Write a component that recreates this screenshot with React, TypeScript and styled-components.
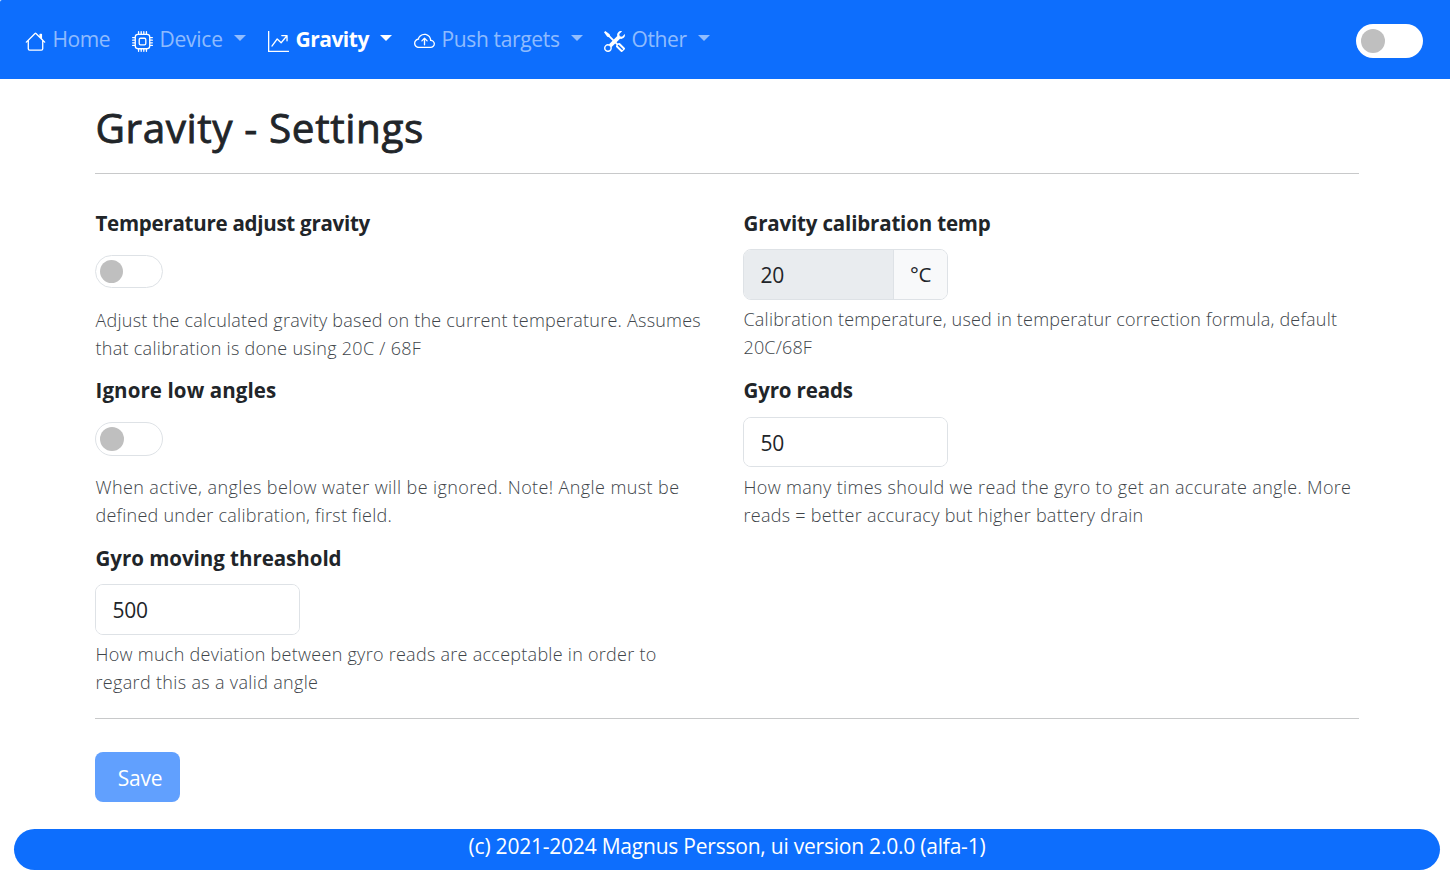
import React from "react";
import styled, { createGlobalStyle } from "styled-components";
import { BsHouse, BsCpu, BsGraphUpArrow, BsCloudArrowUp, BsTools } from "react-icons/bs";

const GlobalStyle = createGlobalStyle`
  *, *::before, *::after { box-sizing: border-box; }
  html { background: #fff; }
  body {
    margin: 0;
    color: #212529;
    background: #fff;
    font-family: "Segoe UI", "Open Sans", "Noto Sans", sans-serif;
    font-size: 21px;
    overflow: hidden;
  }
`;

const Page = styled.div`
  display: flex;
  flex-direction: column;
  height: 873px;
`;

const Navbar = styled.nav`
  display: flex;
  align-items: center;
  flex: none;
  height: 79px;
  padding: 2px 27px 0 25px;
  background: #0d6efd;
  border-top-left-radius: 2px;
`;

const NavItem = styled.a<{ $width: number; $active?: boolean }>`
  display: flex;
  align-items: center;
  flex: none;
  width: ${(p) => p.$width}px;
  height: 32px;
  color: ${(p) => (p.$active ? "#fff" : "rgba(255, 255, 255, 0.55)")};
  font-weight: ${(p) => (p.$active ? 700 : 400)};
  white-space: nowrap;

  svg {
    flex: none;
    color: #fff;
    margin: 1px 6.5px 0 0;
  }
`;

const NavText = styled.span<{ $spacing: number }>`
  line-height: 28px;
  letter-spacing: ${(p) => p.$spacing}px;
  margin-bottom: 3px;
`;

const Caret = styled.span`
  flex: none;
  margin: 0 0 5px 11.5px;
  border-top: 6px solid currentColor;
  border-left: 6px solid transparent;
  border-right: 6px solid transparent;
`;

const Toggle = styled.button<{ $borderless?: boolean; $compact?: boolean }>`
  display: flex;
  align-items: center;
  flex: none;
  width: ${(p) => (p.$borderless ? 67 : 68)}px;
  height: ${(p) => (p.$compact ? 33 : 34)}px;
  padding: 0 ${(p) => (p.$borderless ? 5 : 4)}px;
  border: ${(p) => (p.$borderless ? "0" : "1px solid #dee2e6")};
  border-radius: 17px;
  background: #fff;

  &::before {
    content: "";
    width: ${(p) => (p.$compact ? 23 : 24)}px;
    height: ${(p) => (p.$compact ? 23 : 24)}px;
    border-radius: 50%;
    background: #bfbfbf;
  }
`;

const NavEnd = styled.div`
  display: flex;
  margin-left: auto;
`;

const Main = styled.main`
  width: 1264px;
  margin-left: 95px;
  flex: 1;
`;

const Title = styled.h1`
  margin: 0;
  padding: 22px 0 0 0.5px;
  height: 94px;
  font-size: 40.5px;
  line-height: 54px;
  font-weight: 500;
  letter-spacing: 0.58px;
  -webkit-text-stroke: 0.8px currentColor;
`;

const Rule = styled.hr`
  margin: 0;
  border: 0;
  height: 1px;
  background: #c8c9ca;
`;

const Fields = styled.div`
  display: grid;
  grid-template-columns: 616px 616px;
  grid-template-rows: 167px 168px 177px;
  column-gap: 32px;
  padding-top: 32px;
`;

const Field = styled.section`
  display: flex;
  flex-direction: column;
`;

const Label = styled.label<{ $spacing: number; $height?: number }>`
  height: ${(p) => p.$height ?? 43}px;
  line-height: 34px;
  padding-left: 0.5px;
  font-size: 20.5px;
  font-weight: 700;
  letter-spacing: ${(p) => p.$spacing}px;
  white-space: nowrap;
`;

const Control = styled.div<{ $toggle?: boolean }>`
  display: flex;
  height: ${(p) => (p.$toggle ? 57 : 56)}px;
  padding-top: ${(p) => (p.$toggle ? 6 : 0)}px;
  align-items: flex-start;
`;

const InputGroup = styled.div<{ $height?: number }>`
  display: flex;
  width: 205px;
  height: ${(p) => p.$height ?? 51}px;
  border: 1px solid #dee2e6;
  border-radius: 8px;
  overflow: hidden;
`;

const Input = styled.input<{ $compact?: boolean }>`
  flex: 1;
  min-width: 0;
  height: 100%;
  border: 0;
  padding: ${(p) => (p.$compact ? 2 : 0)}px 16px 0 16.5px;
  color: #212529;
  background: #fff;
  font: inherit;
  letter-spacing: -0.3px;
  outline: none;

  &:disabled { background: #e9ecef; }
`;

const Unit = styled.span`
  width: 54px;
  border-left: 1px solid #dee2e6;
  background: #f8f9fa;
  text-align: center;
  line-height: 49px;
  font-size: 20.5px;
  letter-spacing: -0.3px;
`;

const Help = styled.p`
  margin: 0;
  padding-left: 0.5px;
  color: #40454a;
  font-size: 18px;
  line-height: 28px;
  font-weight: 300;
`;

const Line = styled.span<{ $spacing: number; $gap?: number }>`
  display: block;
  white-space: nowrap;
  letter-spacing: ${(p) => p.$spacing}px;

  & + & { margin-top: ${(p) => p.$gap ?? 0}px; }
`;

const SaveButton = styled.button`
  display: block;
  width: 85px;
  height: 50px;
  margin-top: 33px;
  padding: 2px 0 0 5px;
  border: 0;
  border-radius: 8px;
  background: #61a0fe;
  color: #fff;
  font: inherit;
  letter-spacing: -0.3px;
`;

const Footer = styled.footer`
  flex: none;
  height: 41px;
  margin: 0 10px 3px 14px;
  border-radius: 20.5px;
  background: #0d6efd;
  color: #fff;
  text-align: center;
  line-height: 35px;
  letter-spacing: -0.22px;
`;

type HelpLine = [string, number];

interface FieldData {
  label: string;
  spacing: number;
  help: HelpLine[];
  value?: string;
  unit?: string;
  labelHeight?: number;
  inputHeight?: number;
  compactToggle?: boolean;
  lineGap?: number;
}

const fields: FieldData[] = [
  {
    label: "Temperature adjust gravity",
    spacing: -0.26,
    compactToggle: true,
    help: [
      ["Adjust the calculated gravity based on the current temperature. Assumes", 0.23],
      ["that calibration is done using 20C / 68F", 0.28],
    ],
  },
  {
    label: "Gravity calibration temp",
    spacing: -0.17,
    value: "20",
    unit: "°C",
    help: [
      ["Calibration temperature, used in temperatur correction formula, default", 0.2],
      ["20C/68F", 0.15],
    ],
  },
  {
    label: "Ignore low angles",
    spacing: 0.1,
    lineGap: 1,
    help: [
      ["When active, angles below water will be ignored. Note! Angle must be", 0.4],
      ["defined under calibration, first field.", 0.25],
    ],
  },
  {
    label: "Gyro reads",
    spacing: -0.15,
    value: "50",
    labelHeight: 44,
    inputHeight: 50,
    help: [
      ["How many times should we read the gyro to get an accurate angle. More", 0.33],
      ["reads = better accuracy but higher battery drain", 0.27],
    ],
  },
  {
    label: "Gyro moving threashold",
    spacing: -0.03,
    value: "500",
    help: [
      ["How much deviation between gyro reads are acceptable in order to", 0.27],
      ["regard this as a valid angle", 0.33],
    ],
  },
];

export default function App() {
  return (
    <Page>
      <GlobalStyle />
      <Navbar>
        <NavItem $width={107}>
          <BsHouse size={21} />
          <NavText $spacing={-0.4}>Home</NavText>
        </NavItem>
        <NavItem $width={136}>
          <BsCpu size={21} />
          <NavText $spacing={-0.25}>Device</NavText>
          <Caret />
        </NavItem>
        <NavItem $width={146} $active>
          <BsGraphUpArrow size={21} />
          <NavText $spacing={-0.5}>Gravity</NavText>
          <Caret />
        </NavItem>
        <NavItem $width={190}>
          <BsCloudArrowUp size={21} />
          <NavText $spacing={-0.35}>Push targets</NavText>
          <Caret />
        </NavItem>
        <NavItem $width={110}>
          <BsTools size={21} />
          <NavText $spacing={-0.4}>Other</NavText>
          <Caret />
        </NavItem>
        <NavEnd>
          <Toggle $borderless aria-label="Dark mode" />
        </NavEnd>
      </Navbar>
      <Main>
        <Title>Gravity - Settings</Title>
        <Rule />
        <Fields>
          {fields.map((f) => (
            <Field key={f.label}>
              <Label $spacing={f.spacing} $height={f.labelHeight}>{f.label}</Label>
              <Control $toggle={!f.value}>
                {f.value ? (
                  <InputGroup $height={f.inputHeight}>
                    <Input
                      defaultValue={f.value}
                      disabled={!!f.unit}
                      $compact={!!f.inputHeight}
                    />
                    {f.unit && <Unit>{f.unit}</Unit>}
                  </InputGroup>
                ) : (
                  <Toggle aria-label={f.label} $compact={f.compactToggle} />
                )}
              </Control>
              <Help>
                {f.help.map(([text, spacing]) => (
                  <Line key={text} $spacing={spacing} $gap={f.lineGap}>{text}</Line>
                ))}
              </Help>
            </Field>
          ))}
        </Fields>
        <Rule />
        <SaveButton>Save</SaveButton>
      </Main>
      <Footer>(c) 2021-2024 Magnus Persson, ui version 2.0.0 (alfa-1)</Footer>
    </Page>
  );
}
